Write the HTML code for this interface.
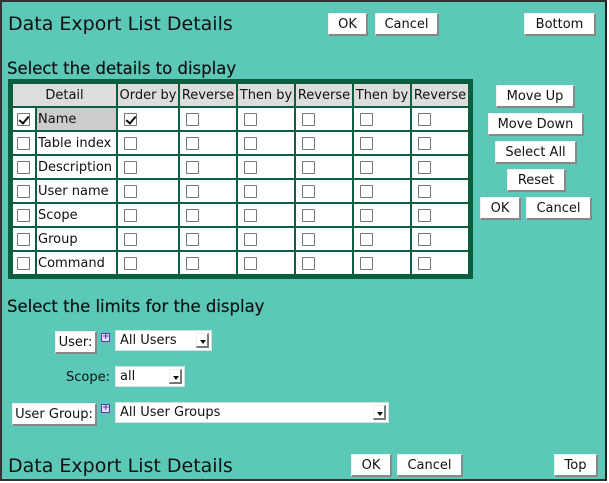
<!DOCTYPE html>
<html><head><style>
*{box-sizing:border-box;margin:0;padding:0}
body{width:609px;height:483px;background:#fff;font-family:"DejaVu Sans","Liberation Sans",sans-serif;font-size:13px;color:#111;position:relative;overflow:hidden}
#pg{position:absolute;left:0;top:0;width:607px;height:481px;background:#5cc8b8;border:2px solid #333;border-right-color:#222}
.a{position:absolute;white-space:nowrap}
.btn{position:absolute;background:#fff;border:1px solid #eee;border-right:2px solid #888;border-bottom:2px solid #888;text-align:center;font-size:13px;line-height:21px;height:23px}
h1{position:absolute;font-size:19px;font-weight:normal;color:#111}
h2{position:absolute;font-size:16.5px;font-weight:normal;color:#111;-webkit-text-stroke:0.2px #111}
table{position:absolute;left:10px;top:81px;border:3px solid #0b5e3e;background:#0b5e3e;border-spacing:2px;border-collapse:separate;table-layout:fixed;margin:-2px}
td{background:#fff;height:22px;padding:1px 1px 0;font-size:13px;white-space:nowrap;overflow:hidden}
th{background:#ddd;font-weight:normal;height:22px;padding-top:1px;font-size:13px;white-space:nowrap;overflow:hidden}
.cb{display:inline-block;width:13px;height:13px;border:1px solid #777;background:#fff;vertical-align:middle;margin-left:5px;position:relative;border-radius:1px}
.ck::after{content:"";position:absolute;left:3px;top:0px;width:4px;height:8px;border-right:2px solid #111;border-bottom:2px solid #111;transform:rotate(40deg)}
.sel{position:absolute;background:#fff;border:1px solid #ddd;height:21px;font-size:13px;line-height:20px;padding-left:4px}
.sel i{position:absolute;right:2px;top:2px;width:13px;height:15px;border:1px solid #eee;border-right:2px solid #777;border-bottom:2px solid #777;background:#fff}
.sel i::after{content:"";position:absolute;left:3px;top:6px;border:3px solid transparent;border-top:4px solid #111}
.plus{position:absolute;width:9px;height:9px;border:1px solid #5040a0;background:#e8e0ff;font-size:9px;line-height:7px;text-align:center;color:#5040a0;font-weight:bold}
</style></head><body><div id="pg"></div>
<h1 style="left:8px;top:13px">Data Export List Details</h1>
<div class="btn" style="left:328px;top:13px;width:40px">OK</div>
<div class="btn" style="left:375px;top:13px;width:64px">Cancel</div>
<div class="btn" style="left:524px;top:13px;width:72px">Bottom</div>
<h2 style="left:7px;top:59px">Select the details to display</h2>
<table>
<colgroup><col style="width:22px"><col style="width:79px"><col style="width:60px"><col style="width:56px"><col style="width:56px"><col style="width:56px"><col style="width:56px"><col style="width:56px"></colgroup>
<tr><th colspan="2">Detail</th><th>Order by</th><th>Reverse</th><th>Then by</th><th>Reverse</th><th>Then by</th><th>Reverse</th></tr>
<tr><td style="padding:0"><span class="cb ck" style="margin-left:4px"></span></td><td style="background:#ccc">Name</td><td><span class="cb ck"></span></td><td><span class="cb"></span></td><td><span class="cb"></span></td><td><span class="cb"></span></td><td><span class="cb"></span></td><td><span class="cb"></span></td></tr>
<tr><td style="padding:0"><span class="cb" style="margin-left:4px"></span></td><td>Table index</td><td><span class="cb"></span></td><td><span class="cb"></span></td><td><span class="cb"></span></td><td><span class="cb"></span></td><td><span class="cb"></span></td><td><span class="cb"></span></td></tr>
<tr><td style="padding:0"><span class="cb" style="margin-left:4px"></span></td><td>Description</td><td><span class="cb"></span></td><td><span class="cb"></span></td><td><span class="cb"></span></td><td><span class="cb"></span></td><td><span class="cb"></span></td><td><span class="cb"></span></td></tr>
<tr><td style="padding:0"><span class="cb" style="margin-left:4px"></span></td><td>User name</td><td><span class="cb"></span></td><td><span class="cb"></span></td><td><span class="cb"></span></td><td><span class="cb"></span></td><td><span class="cb"></span></td><td><span class="cb"></span></td></tr>
<tr><td style="padding:0"><span class="cb" style="margin-left:4px"></span></td><td>Scope</td><td><span class="cb"></span></td><td><span class="cb"></span></td><td><span class="cb"></span></td><td><span class="cb"></span></td><td><span class="cb"></span></td><td><span class="cb"></span></td></tr>
<tr><td style="padding:0"><span class="cb" style="margin-left:4px"></span></td><td>Group</td><td><span class="cb"></span></td><td><span class="cb"></span></td><td><span class="cb"></span></td><td><span class="cb"></span></td><td><span class="cb"></span></td><td><span class="cb"></span></td></tr>
<tr><td style="padding:0"><span class="cb" style="margin-left:4px"></span></td><td>Command</td><td><span class="cb"></span></td><td><span class="cb"></span></td><td><span class="cb"></span></td><td><span class="cb"></span></td><td><span class="cb"></span></td><td><span class="cb"></span></td></tr>
</table>
<div class="btn" style="left:496px;top:85px;width:79px">Move Up</div>
<div class="btn" style="left:488px;top:113px;width:96px">Move Down</div>
<div class="btn" style="left:495px;top:141px;width:82px">Select All</div>
<div class="btn" style="left:507px;top:169px;width:59px">Reset</div>
<div class="btn" style="left:480px;top:197px;width:41px">OK</div>
<div class="btn" style="left:526px;top:197px;width:66px">Cancel</div>
<h2 style="left:7px;top:297px">Select the limits for the display</h2>
<div class="btn" style="left:55px;top:331px;width:42px">User:</div>
<div class="plus" style="left:101px;top:333px">+</div>
<div class="sel" style="left:115px;top:330px;width:97px">All Users<i></i></div>
<div class="a" style="left:66px;top:370px">Scope:</div>
<div class="sel" style="left:115px;top:366px;width:70px">all<i></i></div>
<div class="btn" style="left:12px;top:403px;width:85px">User Group:</div>
<div class="plus" style="left:101px;top:404px">+</div>
<div class="sel" style="left:115px;top:402px;width:274px">All User Groups<i></i></div>
<h1 style="left:8px;top:455px">Data Export List Details</h1>
<div class="btn" style="left:351px;top:454px;width:41px">OK</div>
<div class="btn" style="left:397px;top:454px;width:66px">Cancel</div>
<div class="btn" style="left:554px;top:454px;width:44px">Top</div>
</body></html>
